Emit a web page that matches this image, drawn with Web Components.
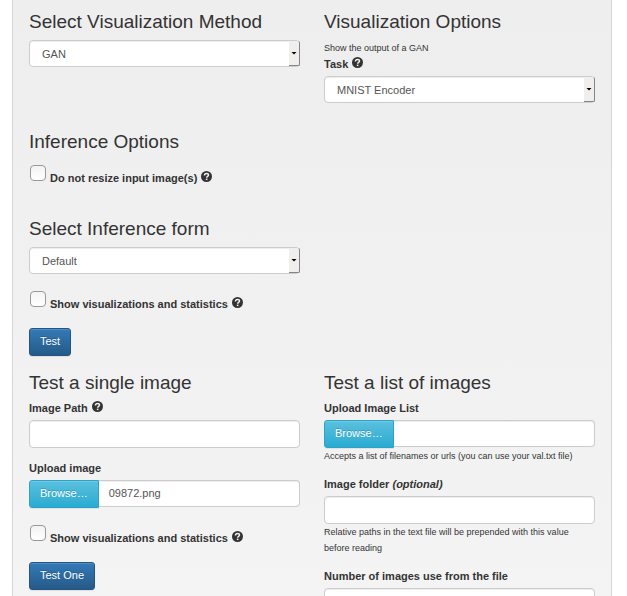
<!DOCTYPE html>
<html lang="en">
<head>
<meta charset="utf-8">
<title>Visualization</title>
<style>
  html { background: #fff; }
  body {
    margin: 0 15px 0 12px;
    font: 11px/16px "Liberation Sans", Arial, Helvetica, sans-serif;
    color: #333;
  }
  .tests { --heading-gap: 5px; }
</style>
</head>
<body>
<app-panel>
  <two-columns class="methods">
    <form-section heading="Select Visualization Method">
      <select-field name="Visualization method" options="GAN"></select-field>
    </form-section>
    <form-section heading="Visualization Options">
      <help-text>Show the output of a GAN</help-text>
      <select-field label="Task" help options="MNIST Encoder"></select-field>
    </form-section>
  </two-columns>
  <two-columns class="inference">
    <form-section heading="Inference Options">
      <check-field class="first" label="Do not resize input image(s)"></check-field>
    </form-section>
  </two-columns>
  <two-columns class="form">
    <form-section heading="Select Inference form">
      <select-field name="Inference form" options="Default"></select-field>
      <check-field label="Show visualizations and statistics"></check-field>
      <action-button>Test</action-button>
    </form-section>
  </two-columns>
  <two-columns class="tests">
    <form-section heading="Test a single image">
      <text-field label="Image Path" help></text-field>
      <file-field label="Upload image" file="09872.png"></file-field>
      <check-field label="Show visualizations and statistics"></check-field>
      <action-button>Test One</action-button>
    </form-section>
    <form-section heading="Test a list of images">
      <file-field label="Upload Image List"></file-field>
      <help-text>Accepts a list of filenames or urls (you can use your val.txt file)</help-text>
      <text-field label="Image folder" note="(optional)"></text-field>
      <help-text>Relative paths in the text file will be prepended with this value before reading</help-text>
      <text-field label="Number of images use from the file"></text-field>
    </form-section>
  </two-columns>
</app-panel>

<script>
const base = `
  *, *::before, *::after { box-sizing: border-box; }
  :host { display: block; }
  label, .label { display: block; font-weight: bold; line-height: 16px; }
  .label { margin-bottom: 4px; display: flex; gap: 4px; }
  .control {
    width: 100%; height: 28px; padding: 0 12px;
    border: 1px solid #ccc; border-radius: 4px; background: #fff;
    box-shadow: inset 0 1px 1px rgba(0,0,0,.075);
    font: inherit; color: #555; outline: none;
  }
  .control:focus { border-color: #66afe9; }
`;

class BaseElement extends HTMLElement {
  connectedCallback() {
    if (this.shadowRoot) return;
    const root = this.attachShadow({ mode: "open" });
    root.innerHTML = `<style>${base}${this.styles()}</style>${this.markup()}`;
    this.ready(root);
  }
  attr(name) { return this.getAttribute(name) || ""; }
  labelRow() {
    if (!this.attr("label")) return "";
    const note = this.attr("note") ? ` <em>${this.attr("note")}</em>` : "";
    const help = this.hasAttribute("help") ? "<help-icon></help-icon>" : "";
    return `<div class="label"><label for="field">${this.attr("label")}${note}</label>${help}</div>`;
  }
  styles() { return ""; }
  markup() { return "<slot></slot>"; }
  ready() {}
}

customElements.define("app-panel", class extends BaseElement {
  styles() {
    return `:host {
      padding: 10px 16px 24px;
      border: solid #d5d5d5; border-width: 0 1px;
      background: linear-gradient(#eee, #f4f4f4);
    }`;
  }
});

customElements.define("two-columns", class extends BaseElement {
  styles() {
    return `:host { display: grid; grid-template-columns: 1fr 1fr; gap: 24px; }
      :host(.methods) { padding-bottom: 27px; }
      :host(.inference) { padding-bottom: 31px; }
      :host(.form) { padding-bottom: 15px; }`;
  }
});

customElements.define("form-section", class extends BaseElement {
  styles() {
    return `:host { min-width: 0; }
      h2 { margin: 0 0 var(--heading-gap, 6px); font-size: 19px; line-height: 24px; font-weight: normal; }`;
  }
  markup() { return `<h2>${this.attr("heading")}</h2><slot></slot>`; }
});

customElements.define("help-icon", class extends BaseElement {
  styles() { return `:host { width: 11px; height: 14px; } svg { display: block; margin-top: 1px; }`; }
  markup() {
    return `<svg width="11" height="12" viewBox="0 0 22 24" aria-hidden="true">
      <circle cx="11" cy="11" r="11" fill="#333"/>
      <path d="M7 9.200V8.400C7 6 8.800 4.800 11.200 4.800S15 6.200 15 8.200C15 11 11.300 10.600 11.300 13.600" fill="none" stroke="#f0f0f0" stroke-width="3"/>
      <rect x="9.700" y="15.200" width="3.200" height="3" fill="#f0f0f0"/>
    </svg>`;
  }
});

customElements.define("help-text", class extends BaseElement {
  styles() { return `:host { font-size: 9px; line-height: 16px; }`; }
});

customElements.define("select-field", class extends BaseElement {
  styles() {
    return `.wrap { display: grid; }
      .wrap > * { grid-area: 1 / 1; }
      select.control { appearance: none; height: 27px; }
      .arrow {
        justify-self: end; width: 11px; margin: 1px 0 1px 1px; pointer-events: none;
        display: grid; place-items: center;
        background: #f0efee; border: solid #858585; border-width: 0 1px 1px 0;
        border-radius: 0 2px 2px 0;
      }
      .arrow::before { content: ""; width: 6px; height: 3px; background: #000; clip-path: polygon(0 0, 100% 0, 50% 100%); }`;
  }
  markup() {
    const options = this.attr("options").split("|").map(o => `<option>${o}</option>`).join("");
    const name = this.attr("name") ? ` aria-label="${this.attr("name")}"` : "";
    return `${this.labelRow()}<div class="wrap"><select id="field" class="control"${name}>${options}</select><span class="arrow"></span></div>`;
  }
});

customElements.define("check-field", class extends BaseElement {
  styles() {
    return `:host { margin: 17px 0 16px; }
      :host(.first) { margin: 11px 0 0; }
      .row { display: flex; height: 21px; gap: 4px; align-items: flex-end; }
      input {
        appearance: none; align-self: flex-start; width: 16px; height: 16px; margin: 0 0 0 1px;
        border: 1px solid #999; border-radius: 4px;
        background: linear-gradient(#f3f3f3, #fff);
      }
      input:checked { background: #337ab7; }
      help-icon { height: 16px; }`;
  }
  markup() {
    return `<div class="row"><input type="checkbox" id="field"><label for="field">${this.attr("label")}</label><help-icon></help-icon></div>`;
  }
});

customElements.define("text-field", class extends BaseElement {
  styles() { return `:host(:not(:nth-child(1))) { margin-top: 12px; } input { display: block; }`; }
  markup() { return `${this.labelRow()}<input type="text" id="field" class="control">`; }
});

customElements.define("file-field", class extends BaseElement {
  styles() {
    return `:host(:not(:nth-child(1))) { margin-top: 12px; }
      .group { display: flex; }
      button {
        height: 28px; padding: 0 10px 2px; font: inherit; color: #fff; white-space: nowrap;
        border: 1px solid #28a4c9; border-radius: 3px 0 0 3px;
        background: linear-gradient(#5bc0de, #2aabd2);
        text-shadow: 0 -1px 0 rgba(0,0,0,.2);
        box-shadow: inset 0 1px 0 rgba(255,255,255,.15), 0 1px 1px rgba(0,0,0,.075);
      }
      output.control {
        display: block; flex: 1; height: 27px; min-width: 0; padding: 0 10px; line-height: 25px;
        border-left: 0; border-radius: 0 4px 4px 0;
      }`;
  }
  markup() {
    return `${this.labelRow()}<div class="group"><input type="file" id="field" hidden>
      <button type="button">Browse…</button><output class="control" for="field">${this.attr("file")}</output></div>`;
  }
  ready(root) {
    const input = root.querySelector("input");
    root.querySelector("button").addEventListener("click", () => input.click());
    input.addEventListener("change", () => {
      root.querySelector("output").textContent = input.files.length ? input.files[0].name : "";
    });
  }
});

customElements.define("action-button", class extends BaseElement {
  styles() {
    return `button {
        display: block; height: 28px; padding: 0 10px 2px; font: inherit; color: #fff;
        border: 1px solid #245580; border-radius: 3px;
        background: linear-gradient(#337ab7, #265a88);
        text-shadow: 0 -1px 0 rgba(0,0,0,.2);
        box-shadow: inset 0 1px 0 rgba(255,255,255,.15), 0 1px 1px rgba(0,0,0,.075);
      }`;
  }
  markup() { return `<button type="button"><slot></slot></button>`; }
});
</script>
</body>
</html>
